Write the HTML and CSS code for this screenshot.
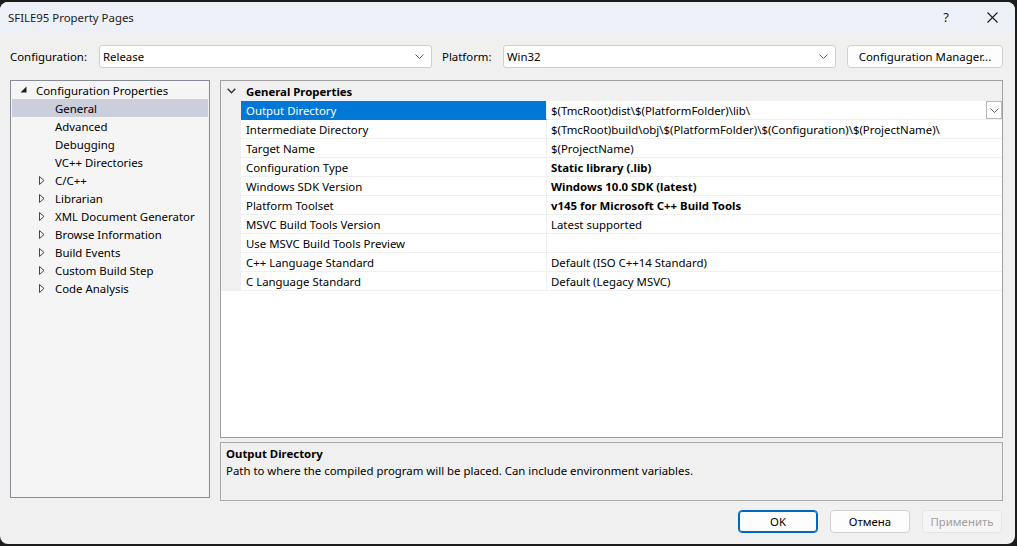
FILE: index.html
```html
<!DOCTYPE html>
<html lang="en">
<head>
  <meta charset="UTF-8">
  <title>SFILE95 Property Pages</title>
  <link rel="stylesheet" href="styles.css">
</head>
<body>
  <div class="window">

    <!-- Title bar -->
    <div class="titlebar">
      <span class="title">SFILE95 Property Pages</span>
      <span class="help">?</span>
      <span class="close">
        <svg width="11" height="11" viewBox="0 0 11 11"><path d="M0.5 0.5 L10.5 10.5 M10.5 0.5 L0.5 10.5" stroke="#1a1a1a" stroke-width="1.1" fill="none"/></svg>
      </span>
    </div>

    <!-- Configuration / platform -->
    <div class="config-row">
      <span class="lbl lbl-config">Configuration:</span>
      <div class="combo">
        <span>Release</span>
        <svg class="chev" width="9" height="5" viewBox="0 0 9 5"><path d="M0.5 0.5 L4.5 4.5 L8.5 0.5" stroke="#606060" stroke-width="1" fill="none"/></svg>
      </div>
      <span class="lbl lbl-platform">Platform:</span>
      <div class="combo">
        <span>Win32</span>
        <svg class="chev" width="9" height="5" viewBox="0 0 9 5"><path d="M0.5 0.5 L4.5 4.5 L8.5 0.5" stroke="#606060" stroke-width="1" fill="none"/></svg>
      </div>
      <button class="btn btn-cfg">Configuration Manager...</button>
    </div>

    <div class="main">
      <!-- Tree -->
      <div class="tree">
        <div class="node root">
          <svg class="exp" width="7" height="7" viewBox="0 0 7 7"><path d="M6.5 0.5 L6.5 6.5 L0.5 6.5 Z" fill="#1e1e1e"/></svg>
          <span>Configuration Properties</span>
        </div>
        <div class="node child selected"><span>General</span></div>
        <div class="node child"><span>Advanced</span></div>
        <div class="node child"><span>Debugging</span></div>
        <div class="node child"><span>VC++ Directories</span></div>
        <div class="node child folder"><svg class="col" width="6" height="9" viewBox="0 0 6 9"><path d="M0.5 0.5 L5 4.5 L0.5 8.5 Z" fill="none" stroke="#444" stroke-width="1"/></svg><span>C/C++</span></div>
        <div class="node child folder"><svg class="col" width="6" height="9" viewBox="0 0 6 9"><path d="M0.5 0.5 L5 4.5 L0.5 8.5 Z" fill="none" stroke="#444" stroke-width="1"/></svg><span>Librarian</span></div>
        <div class="node child folder"><svg class="col" width="6" height="9" viewBox="0 0 6 9"><path d="M0.5 0.5 L5 4.5 L0.5 8.5 Z" fill="none" stroke="#444" stroke-width="1"/></svg><span>XML Document Generator</span></div>
        <div class="node child folder"><svg class="col" width="6" height="9" viewBox="0 0 6 9"><path d="M0.5 0.5 L5 4.5 L0.5 8.5 Z" fill="none" stroke="#444" stroke-width="1"/></svg><span>Browse Information</span></div>
        <div class="node child folder"><svg class="col" width="6" height="9" viewBox="0 0 6 9"><path d="M0.5 0.5 L5 4.5 L0.5 8.5 Z" fill="none" stroke="#444" stroke-width="1"/></svg><span>Build Events</span></div>
        <div class="node child folder"><svg class="col" width="6" height="9" viewBox="0 0 6 9"><path d="M0.5 0.5 L5 4.5 L0.5 8.5 Z" fill="none" stroke="#444" stroke-width="1"/></svg><span>Custom Build Step</span></div>
        <div class="node child folder"><svg class="col" width="6" height="9" viewBox="0 0 6 9"><path d="M0.5 0.5 L5 4.5 L0.5 8.5 Z" fill="none" stroke="#444" stroke-width="1"/></svg><span>Code Analysis</span></div>
      </div>

      <div class="right">
        <!-- Property grid -->
        <div class="grid">
          <div class="category">
            <svg class="cat-chev" width="9" height="6" viewBox="0 0 9 6"><path d="M0.7 0.7 L4.5 4.8 L8.3 0.7" stroke="#333" stroke-width="1.4" fill="none"/></svg>
            <span>General Properties</span>
          </div>
          <div class="row selected">
            <div class="gutter"></div>
            <div class="name">Output Directory</div>
            <div class="value">
              <span>$(TmcRoot)dist\$(PlatformFolder)\lib\</span>
              <span class="drop"><svg width="9" height="5" viewBox="0 0 9 5"><path d="M0.5 0.5 L4.5 4.5 L8.5 0.5" stroke="#606060" stroke-width="1" fill="none"/></svg></span>
            </div>
          </div>
          <div class="row"><div class="gutter"></div><div class="name">Intermediate Directory</div><div class="value">$(TmcRoot)build\obj\$(PlatformFolder)\$(Configuration)\$(ProjectName)\</div></div>
          <div class="row"><div class="gutter"></div><div class="name">Target Name</div><div class="value">$(ProjectName)</div></div>
          <div class="row"><div class="gutter"></div><div class="name">Configuration Type</div><div class="value bold">Static library (.lib)</div></div>
          <div class="row"><div class="gutter"></div><div class="name">Windows SDK Version</div><div class="value bold">Windows 10.0 SDK (latest)</div></div>
          <div class="row"><div class="gutter"></div><div class="name">Platform Toolset</div><div class="value bold">v145 for Microsoft C++ Build Tools</div></div>
          <div class="row"><div class="gutter"></div><div class="name">MSVC Build Tools Version</div><div class="value">Latest supported</div></div>
          <div class="row"><div class="gutter"></div><div class="name">Use MSVC Build Tools Preview</div><div class="value"></div></div>
          <div class="row"><div class="gutter"></div><div class="name">C++ Language Standard</div><div class="value">Default (ISO C++14 Standard)</div></div>
          <div class="row"><div class="gutter"></div><div class="name">C Language Standard</div><div class="value">Default (Legacy MSVC)</div></div>
        </div>

        <!-- Description -->
        <div class="desc">
          <div class="desc-title">Output Directory</div>
          <div class="desc-text">Path to where the compiled program will be placed. Can include environment variables.</div>
        </div>
      </div>
    </div>

    <div class="footer">
      <button class="btn btn-ok">OK</button>
      <button class="btn">Отмена</button>
      <button class="btn btn-disabled">Применить</button>
    </div>
  </div>
</body>
</html>
```

FILE: styles.css
```css
* {
  box-sizing: border-box;
}
body {
  margin: 0;
  background: #1c1c1c;
  font-family: 'Noto Sans', 'Liberation Sans', sans-serif;
  font-size: 11.4px;
  color: #000;
  height: 546px;
  overflow: hidden;
}
.window {
  margin: 2px 2px 2px 0;
  width: 1015px;
  height: 542px;
  background: #f0f0f0;
  border-radius: 8px;
  overflow: hidden;
  display: flex;
  flex-direction: column;
}
.titlebar {
  height: 32px;
  background: #eef0f7;
  display: flex;
  align-items: center;
  padding: 0 0 2px 8px;
}
.title {
  flex: 1;
  color: #1a1a1a;
}
.help {
  width: 46px;
  text-align: center;
  font-size: 13px;
  color: #1a1a1a;
}
.close {
  width: 46px;
  height: 30px;
  display: flex;
  align-items: center;
  justify-content: center;
}
.config-row {
  display: flex;
  align-items: center;
  height: 23px;
  margin: 11px 0 0 10px;
}
.lbl-config {
  width: 89px;
}
.lbl-platform {
  width: 61px;
  margin-left: 10px;
}
.combo {
  width: 333px;
  height: 23px;
  background: #fff;
  border: 1px solid #cfcfcf;
  border-radius: 3px;
  display: flex;
  align-items: center;
  justify-content: space-between;
  padding: 0 5px 0 3px;
}
.chev {
  margin-right: 2px;
}
.btn {
  font-family: inherit;
  font-size: 11.4px;
  height: 23px;
  background: #fdfdfd;
  border: 1px solid #d0d0d0;
  border-radius: 4px;
  color: #000;
  padding: 0;
}
.btn-cfg {
  width: 156px;
  margin-left: 11px;
}
.main {
  display: flex;
  gap: 10px;
  margin: 12px 12px 0 10px;
  height: 421px;
}
.tree {
  width: 200px;
  height: 418px;
  background: #f5f5f5;
  border: 1px solid #868a93;
  padding: 0 1px;
}
.node {
  height: 18px;
  display: flex;
  align-items: center;
  position: relative;
  white-space: nowrap;
}
.node.root {
  padding-left: 24px;
}
.node.root .exp {
  position: absolute;
  left: 8px;
  top: 5px;
}
.node.child {
  padding-left: 43px;
}
.node.folder .col {
  position: absolute;
  left: 27px;
  top: 5px;
}
.node.selected {
  background: #cccedb;
}
.right {
  flex: 1;
  display: flex;
  flex-direction: column;
}
.grid {
  height: 358px;
  background: #fff;
  border: 1px solid #a0a0a0;
}
.category {
  height: 20px;
  background: #f0f0f0;
  display: flex;
  align-items: center;
  font-weight: bold;
  position: relative;
  padding-left: 25px;
}
.cat-chev {
  position: absolute;
  left: 6px;
  top: 7px;
}
.row {
  display: grid;
  grid-template-columns: 20px 306px 1fr;
  height: 19px;
}
.gutter {
  background: #f0f0f0;
}
.name, .value {
  border-bottom: 1px solid #f0f0f0;
  padding-left: 5px;
  display: flex;
  align-items: center;
  white-space: nowrap;
}
.name {
  border-right: 1px solid #f0f0f0;
}
.value {
  padding-left: 4px;
  justify-content: space-between;
}
.bold {
  font-weight: bold;
}
.row.selected .name {
  background: #0078d7;
  color: #fff;
  border-bottom-color: #0078d7;
}
.drop {
  width: 16px;
  height: 18px;
  border: 1px solid #b9b9b9;
  background: #fff;
  display: flex;
  align-items: center;
  justify-content: center;
}
.desc {
  margin-top: 4px;
  height: 59px;
  border: 1px solid #a8a8a8;
  background: #f0f0f0;
  padding: 3px 5px;
}
.desc-title {
  font-weight: bold;
  height: 17px;
}
.desc-text {
  height: 17px;
}
.footer {
  display: flex;
  justify-content: flex-end;
  gap: 12px;
  margin: 9px 13px 0 0;
}
.footer .btn {
  width: 80px;
}
.btn-ok {
  border: 1px solid #0067c0;
  box-shadow: inset 0 0 0 1px #0067c0;
}
.btn-disabled {
  color: #a0a0a0;
  background: #f5f5f5;
  border-color: #e5e5e5;
}
```
